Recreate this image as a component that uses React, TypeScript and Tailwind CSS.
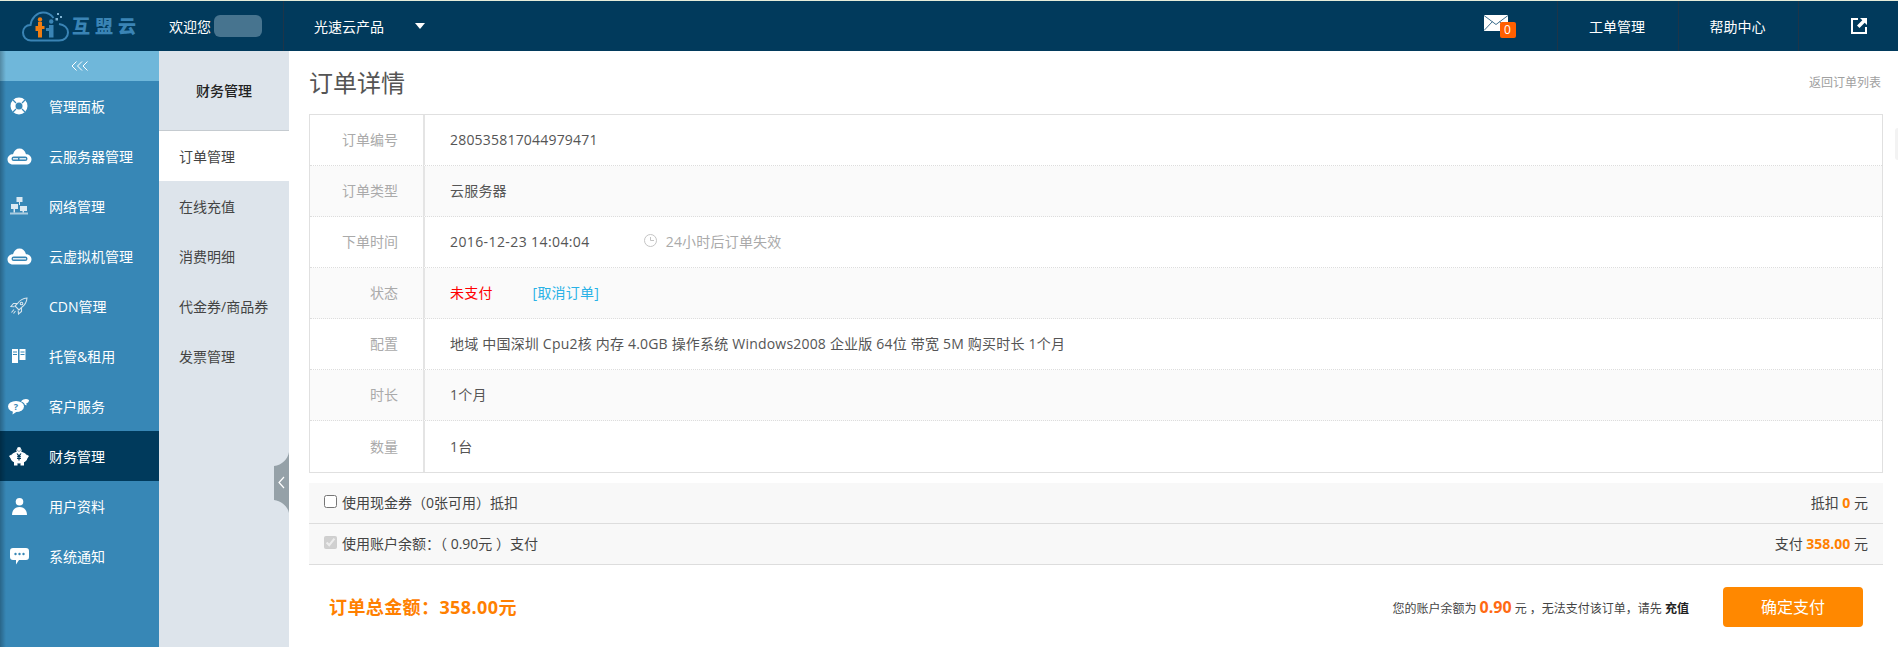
import type { ReactNode } from "react";

const FONT = "font-['Open_Sans','Noto_Sans_CJK_SC',sans-serif]";

function Ring() {
  return (
    <svg width="18" height="18" viewBox="0 0 18 18">
      <circle cx="9" cy="9" r="6" fill="none" stroke="#fff" strokeWidth="5" />
      <g stroke="#3787b6" strokeWidth="1.2">
        <path d="M3 3l3 3M15 3l-3 3M3 15l3-3M15 15l-3-3" />
      </g>
    </svg>
  );
}

function CloudServer({ dense }: { dense?: boolean }) {
  return (
    <svg width="25" height="18" viewBox="0 0 25 18">
      <path
        d="M6 17.5C2.5 17.5 .5 15 .5 12.2 .5 9.3 3 7.2 6 7.2 7 3.5 9.5 1.5 12.5 1.5s5.500 2 6.500 5.700c3 0 5.500 2.100 5.500 5s-2 5.300-5.500 5.300z"
        fill="#fff"
      />
      <rect x="4.500" y="9.500" width="16" height="4.500" rx="2.200" fill="#3787b6" />
      <rect x="6" y="11" width={dense ? 13 : 5} height="1.500" fill="#dbe9f2" />
      {!dense && <rect x="12.500" y="11" width="6.500" height="1.500" fill="#dbe9f2" />}
    </svg>
  );
}

function Network() {
  return (
    <svg width="18" height="18" viewBox="0 0 18 18" fill="#dbe9f2">
      <rect x="6.500" y="0" width="6" height="5" />
      <rect x="1" y="7" width="7" height="5" />
      <rect x="10" y="9" width="7" height="5" />
      <rect x="0" y="15.500" width="18" height="2" opacity=".7" />
      <path d="M9 5h1v3H9zM3.500 12h1.500v3.500H3.500zM12.500 14H14v1.500h-1.500z" />
    </svg>
  );
}

function Rocket() {
  return (
    <svg width="18" height="18" viewBox="0 0 18 18" fill="none" stroke="#d5e3ec" strokeWidth="1.100">
      <path d="M17 1c-4 .3-7 2-9.500 5.500L5 9l4 4 2.500-2.500C15 8 16.700 5 17 1z" />
      <circle cx="11.500" cy="6.500" r="1.300" />
      <path d="M7 6.500H3.500L1 9.500l3.500.3M11.500 11v3.500L8.500 17l-.3-3.500M4 12.500l-2.500 3M5.500 14l-2 2.500" />
    </svg>
  );
}

function Hosting() {
  return (
    <svg width="14" height="14" viewBox="0 0 14 14" fill="#fff">
      <rect x="0" y="0" width="6" height="14" />
      <rect x="7.500" y="0" width="6" height="11" />
      <path d="M1 2.500h4v1H1zM1 5h4v1H1zM8.500 2.500h4v1h-4zM8.500 5h4v1h-4z" fill="#3787b6" />
    </svg>
  );
}

function Chat() {
  return (
    <svg width="22" height="17" viewBox="0 0 22 17" fill="#fff">
      <path d="M13 3.500c2 .5 3.500 1.500 4 3.500l2 .2-1-1.500c2-.7 3-2 3-3.700C18.500.500 15.500.800 13 3.500z" />
      <ellipse cx="8" cy="8.500" rx="8" ry="5.500" />
      <path d="M5 13l-.5 3.500L9 13.500z" />
      <text x="8" y="12" fontSize="9" fontWeight="700" textAnchor="middle" fill="#3787b6">?</text>
    </svg>
  );
}

function Piggy() {
  return (
    <svg width="20" height="19" viewBox="0 0 20 19" fill="#fff">
      <circle cx="10" cy="2" r="2" />
      <path d="M7 2l3 3 3-3-1 4H8z" />
      <ellipse cx="10" cy="10.500" rx="8.500" ry="6" />
      <path d="M0 9l2.500-1.500v5z" />
      <path d="M20 9l-2.500-1.500v5z" />
      <rect x="5" y="15" width="3.500" height="3.500" />
      <rect x="11.500" y="15" width="3.500" height="3.500" />
      <path d="M7.500 6.500h1.400L10 8.300l1.100-1.800h1.400L10.900 9.200H12v1h-1.400v.8H12v1h-1.400v1.500H9.400V12H8v-1h1.400v-.8H8v-1h1.100z" fill="#003a5c" />
    </svg>
  );
}

function User() {
  return (
    <svg width="15" height="17" viewBox="0 0 15 17" fill="#fff">
      <circle cx="7.500" cy="3.800" r="3.800" />
      <path d="M0 17c0-5 3-8 7.500-8s7.500 3 7.500 8z" />
    </svg>
  );
}

function Message() {
  return (
    <svg width="19" height="17" viewBox="0 0 19 17" fill="#fff">
      <path d="M3 0h13a3 3 0 0 1 3 3v6a3 3 0 0 1-3 3H9l-3 4.500V12H3a3 3 0 0 1-3-3V3a3 3 0 0 1 3-3z" />
      <circle cx="5.500" cy="6" r="1.200" fill="#3787b6" />
      <circle cx="9.500" cy="6" r="1.200" fill="#3787b6" />
      <circle cx="13.500" cy="6" r="1.200" fill="#3787b6" />
    </svg>
  );
}

function Logo() {
  return (
    <div className="flex items-center pl-[22px]">
      <svg width="47" height="31" viewBox="0 0 47 31" fill="none">
        <path
          d="M9 29.500C4 29.500 1 25.800 1 21.500s3-7.500 7.500-7.500C9.500 7 15 1.500 21 1.500c4.500 0 8 2 10.500 5.500M37 13c5 .8 9 3.800 9 8.500 0 4.500-3.500 8-9 8H9"
          stroke="#3a84b5"
          strokeWidth="2"
        />
        <path d="M16 11h4v4h2.500v3H20v8.500h-4V20h-2.500v-5H16z" fill="#f07d12" />
        <circle cx="18" cy="8.500" r="2.200" fill="#f07d12" />
        <path d="M27 14h4.500v12.500H27V20h-3v-3h3z" fill="#3a84b5" />
        <circle cx="29.200" cy="10.500" r="2.200" fill="#3a84b5" />
        <path d="M35 2h2v2h-2zM38 5h2v2h-2zM33.500 7h2.500v2.500h-2.500z" fill="#7fb3d3" />
      </svg>
      <span className="ml-[3px] text-[18px] leading-none font-black tracking-[5px] text-[#3a84b5] whitespace-nowrap">
        互盟云
      </span>
    </div>
  );
}

const menu: { label: string; icon: ReactNode; active?: boolean }[] = [
  { label: "管理面板", icon: <Ring /> },
  { label: "云服务器管理", icon: <CloudServer /> },
  { label: "网络管理", icon: <Network /> },
  { label: "云虚拟机管理", icon: <CloudServer dense /> },
  { label: "CDN管理", icon: <Rocket /> },
  { label: "托管&租用", icon: <Hosting /> },
  { label: "客户服务", icon: <Chat /> },
  { label: "财务管理", icon: <Piggy />, active: true },
  { label: "用户资料", icon: <User /> },
  { label: "系统通知", icon: <Message /> },
];

const subMenu = ["订单管理", "在线充值", "消费明细", "代金券/商品券", "发票管理"];

function Row({ label, shaded, children }: { label: string; shaded?: boolean; children: ReactNode }) {
  return (
    <div className={`flex h-[51px] items-center border-b border-dotted border-[#ddd] last:border-b-0 ${shaded ? "bg-[#fafafa]" : "bg-white"}`}>
      <div className="flex h-full w-[115px] shrink-0 items-center justify-end border-r-2 border-[#e4e4e4] pb-[1px] pr-[25px] text-[#aaa]">
        {label}
      </div>
      <div className="flex items-center pb-[1px] pl-[25px] tracking-[0.2px] text-[#555]">{children}</div>
    </div>
  );
}

function PayRow({ checked, left, right }: { checked?: boolean; left: string; right: ReactNode }) {
  return (
    <div className="flex h-[41px] items-center justify-between border-b border-[#ddd] bg-[#f8f8f8] pb-[1px] pl-[15px] pr-[15px] text-[#444]">
      <label className="flex items-center">
        <input type="checkbox" className="m-0 mb-[2px] h-[13px] w-[13px]" defaultChecked={checked} disabled={checked} />
        <span className="ml-[5px]">{left}</span>
      </label>
      <div>{right}</div>
    </div>
  );
}

export default function App() {
  return (
    <div className={`flex h-[647px] w-[1898px] flex-col overflow-hidden bg-white text-[14px] ${FONT}`}>
      {/* top bar */}
      <header className="flex h-[51px] shrink-0 items-center border-t border-[#e6ecd9] bg-[#013a5c] text-white">
        <div className="flex h-full w-[284px] items-center border-r border-[#1d3549]">
          <div className="w-[169px]">
            <Logo />
          </div>
          <span>欢迎您</span>
          <span className="ml-[3px] h-[22px] w-[48px] rounded-md bg-[#47748f]" />
        </div>
        <div className="flex items-center pl-[30px]">
          <span>光速云产品</span>
          <span className="ml-[31px] h-0 w-0 border-x-[5px] border-t-[6px] border-x-transparent border-t-white" />
        </div>
        <div className="ml-auto flex h-full">
          <div className="flex w-[121px] items-center justify-center border-r border-[#1d3549]">
            <div className="relative mr-[3px] mt-[-7px]">
              <svg width="24" height="16" viewBox="0 0 24 16" className="block">
                <rect width="24" height="16" fill="#fff" />
                <path d="M0 .5l12 9 12-9M0 15.500l8.500-9M24 15.500l-8.500-9" fill="none" stroke="#3f6f8e" strokeWidth="1" />
              </svg>
              <span className="absolute left-[16px] top-[7px] flex h-[16px] w-[16px] items-center justify-center rounded-[2px] bg-[#ff5f00] text-[12px] leading-none">
                0
              </span>
            </div>
          </div>
          <div className="flex w-[121px] items-center justify-center border-r border-[#1d3549] pr-[2px]">工单管理</div>
          <div className="flex w-[120px] items-center justify-center border-r border-[#1d3549] pr-[2px]">帮助中心</div>
          <div className="flex w-[99px] items-center pl-[52px]">
            <svg width="16" height="16" viewBox="0 0 16 16">
              <path d="M7 1H1v14h14V9" fill="none" stroke="#fff" strokeWidth="2" />
              <path d="M9 0h7v7l-2.300-2.300L8.500 10 6 7.500l5.300-5.200z" fill="#fff" />
            </svg>
          </div>
        </div>
      </header>

      <div className="flex min-h-0 flex-1">
        {/* main menu */}
        <nav className="relative w-[159px] shrink-0 bg-[#3787b6] text-white">
          <div className="flex h-[30px] items-center justify-center bg-[#6fb7da]">
            <svg width="18" height="10" viewBox="0 0 18 10" fill="none" stroke="#fff" strokeWidth="1">
              <path d="M5.500 .5 1 5l4.500 4.500M11 .5 6.500 5 11 9.500M16.500 .5 12 5l4.500 4.500" />
            </svg>
          </div>
          {menu.map((item) => (
            <div key={item.label} className={`flex h-[50px] items-center ${item.active ? "bg-[#003a5c]" : ""}`}>
              <div className="flex w-[38px] justify-center">{item.icon}</div>
              <span className="ml-[11px]">{item.label}</span>
            </div>
          ))}
          <div className="pointer-events-none absolute inset-y-0 left-0 w-[6px] bg-gradient-to-r from-[#00000040] to-transparent" />
        </nav>

        {/* second menu */}
        <aside className="relative w-[130px] shrink-0 bg-[#dde4eb] text-[#444]">
          <div className="flex h-[80px] items-center justify-center border-b border-[#c5cbd0] font-medium text-[#222]">
            财务管理
          </div>
          {subMenu.map((item, i) => (
            <div key={item} className={`flex h-[50px] items-center pl-[20px] ${i === 0 ? "bg-white" : ""}`}>
              {item}
            </div>
          ))}
          <svg className="absolute right-0 top-[401px]" width="15" height="61" viewBox="0 0 15 61">
            <path d="M15 0v61C14 55 8 49 0 48V14C8 13 14 7 15 0z" fill="#95a1a8" />
            <path d="M10 25l-5 5.500 5 5.500" fill="none" stroke="#fff" strokeWidth="1.200" />
          </svg>
        </aside>

        {/* content */}
        <main className="relative min-w-0 flex-1 pl-[20px] pr-[15px]">
          <div className="flex h-[63px] items-center justify-between">
            <h1 className="text-[24px] font-normal text-[#555]">订单详情</h1>
            <a className="mr-[2px] text-[12px] text-[#a0a0a0]">返回订单列表</a>
          </div>

          <div className="border border-[#e0e0e0]">
            <Row label="订单编号">280535817044979471</Row>
            <Row label="订单类型" shaded>
              云服务器
            </Row>
            <Row label="下单时间">
              <span className="tracking-[0.4px]">2016-12-23 14:04:04</span>
              <svg className="ml-[54px] mb-[3px]" width="13" height="13" viewBox="0 0 13 13" fill="none" stroke="#c4c4c4">
                <circle cx="6.500" cy="6.500" r="6" />
                <path d="M6.500 3v3.500H10" />
              </svg>
              <span className="ml-[9px] text-[#aaa]">24小时后订单失效</span>
            </Row>
            <Row label="状态" shaded>
              <span className="text-[#f00]">未支付</span>
              <a className="ml-[40px] text-[#29b2e6]">[取消订单]</a>
            </Row>
            <Row label="配置">地域 中国深圳 Cpu2核 内存 4.0GB 操作系统 Windows2008 企业版 64位 带宽 5M 购买时长 1个月</Row>
            <Row label="时长" shaded>
              1个月
            </Row>
            <Row label="数量">1台</Row>
          </div>

          <div className="mt-[10px]">
            <PayRow
              left="使用现金券（0张可用）抵扣"
              right={
                <>
                  抵扣 <b className="text-[#ff8000]">0</b> 元
                </>
              }
            />
            <PayRow
              checked
              left="使用账户余额：（ 0.90元 ）支付"
              right={
                <>
                  支付 <b className="text-[#ff8000]">358.00</b> 元
                </>
              }
            />
          </div>

          <div className="flex h-[84px] items-center justify-between pl-[20px] pr-[20px]">
            <div className="text-[18px] font-bold tracking-[0.4px] text-[#ff8000]">订单总金额：358.00元</div>
            <div className="flex items-center">
              <div className="text-[12px] text-[#444]">
                您的账户余额为 <b className="text-[16px] text-[#ff6a13]">0.90</b> 元 ，无法支付该订单，请先 <b className="text-[#222]">充值</b>
              </div>
              <button className="ml-[34px] h-[40px] w-[140px] rounded-[4px] bg-[#ff8800] text-[16px] text-white">确定支付</button>
            </div>
          </div>

          <div className="absolute right-0 top-[77px] h-[32px] w-[3px] rounded-l-full bg-[#f3f3f3]" />
        </main>
      </div>
    </div>
  );
}
